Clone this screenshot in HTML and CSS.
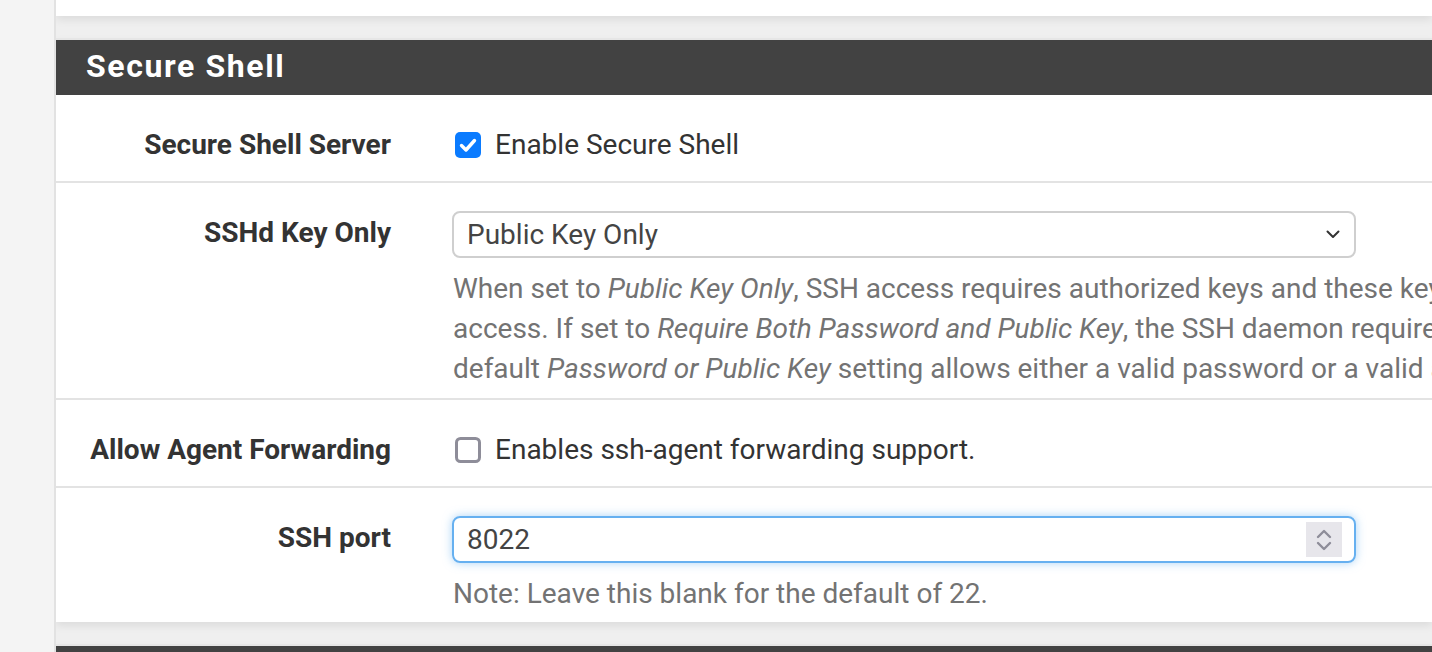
FILE: index.html
```html
<!DOCTYPE html>
<html>
<head>
<meta charset="utf-8">
<link rel="stylesheet" href="styles.css">
</head>
<body>
<div class="page">
  <div class="sidebar"></div>
  <main class="main">
    <section class="panel panel-top"></section>

    <section class="panel">
      <div class="panel-heading"><h2 class="panel-title">Secure Shell</h2></div>
      <div class="panel-body">
        <div class="row">
          <div class="label">Secure Shell Server</div>
          <div class="control">
            <div class="check-line">
              <svg class="cb cb-on" width="26" height="26" viewBox="0 0 26 26"><rect x="0" y="0" width="26" height="26" rx="5" fill="#0a7bff"/><path d="M6.5 13.5 L11 18 L19.5 8.5" fill="none" stroke="#fff" stroke-width="3.4" stroke-linecap="round" stroke-linejoin="round"/></svg>
              <span class="check-text">Enable Secure Shell</span>
            </div>
          </div>
        </div>

        <div class="row row-help">
          <div class="label">SSHd Key Only</div>
          <div class="control">
            <div class="select">
              <span>Public Key Only</span>
              <svg class="chev" width="14" height="9" viewBox="0 0 14 9"><path d="M1.5 1.5 L7 7 L12.5 1.5" fill="none" stroke="#333" stroke-width="2" stroke-linecap="round" stroke-linejoin="round"/></svg>
            </div>
            <div class="help">
              <div class="help-line">When set to <i>Public Key Only</i>, SSH access requires authorized keys and these keys must be configured for each user that has been granted secure shell</div>
              <div class="help-line">access. If set to <i>Require Both Password and Public Key</i>, the SSH daemon requires both authorized keys and valid passwords to gain access. The</div>
              <div class="help-line">default <i>Password or Public Key</i> setting allows either a valid password or a valid authorized key to login.</div>
            </div>
          </div>
        </div>

        <div class="row">
          <div class="label">Allow Agent Forwarding</div>
          <div class="control">
            <div class="check-line">
              <svg class="cb" width="26" height="26" viewBox="0 0 26 26"><rect x="1.5" y="1.5" width="23" height="23" rx="4" fill="#fff" stroke="#8e8d99" stroke-width="3"/></svg>
              <span class="check-text">Enables ssh-agent forwarding support.</span>
            </div>
          </div>
        </div>

        <div class="row row-help row-last">
          <div class="label">SSH port</div>
          <div class="control">
            <div class="input focus">
              <span>8022</span>
              <span class="spinner">
                <svg width="18" height="28" viewBox="0 0 18 28"><path d="M3 11 L9 5 L15 11" fill="none" stroke="#8e8d99" stroke-width="2.4" stroke-linecap="round" stroke-linejoin="round"/><path d="M3 17 L9 23 L15 17" fill="none" stroke="#8e8d99" stroke-width="2.4" stroke-linecap="round" stroke-linejoin="round"/></svg>
              </span>
            </div>
            <div class="help">
              <div class="help-line">Note: Leave this blank for the default of 22.</div>
            </div>
          </div>
        </div>
      </div>
    </section>

    <section class="panel panel-next">
      <div class="panel-heading"></div>
    </section>
  </main>
</div>
</body>
</html>
```

FILE: styles.css
```css
html, body {
  margin: 0;
  padding: 0;
  height: 100%;
  overflow: hidden;
}
body {
  background: #f4f4f4;
  font-family: Roboto, "Liberation Sans", sans-serif;
  color: #333;
}
.page {
  display: flex;
  height: 652px;
  overflow: hidden;
}
.sidebar {
  width: 54px;
  flex: 0 0 54px;
  background: #f4f4f4;
}
.main {
  flex: 1;
  min-width: 0;
  overflow: hidden;
  border-left: 2px solid #e2e2e2;
  background: #efefef;
  display: flex;
  flex-direction: column;
  gap: 22px;
}
.panel {
  background: #fff;
  box-shadow: 0 4px 8px rgba(0, 0, 0, 0.08);
  border-top: 2px solid #e6e6e6;
  flex: 0 0 auto;
}
.panel-top {
  height: 16px;
  border-top: none;
}
.panel-heading {
  background: #424242;
  height: 55px;
  padding-left: 30px;
  display: flex;
  align-items: center;
}
.panel-title {
  margin: 0 0 4px;
  color: #fff;
  font-size: 32px;
  font-weight: 700;
  letter-spacing: 1.6px;
  line-height: 1;
}
.row {
  display: grid;
  grid-template-columns: 335px 904px;
  column-gap: 61px;
  padding: 28px 0 18px;
  border-bottom: 2px solid #e3e3e3;
}
.row-help {
  padding-bottom: 10px;
}
.row-last {
  border-bottom: none;
  padding-bottom: 9px;
}
.label {
  text-align: right;
  font-weight: 700;
  font-size: 28px;
  line-height: 40px;
  padding-top: 2px;
  margin-bottom: -2px;
  color: #333;
  white-space: nowrap;
}
.control {
  font-size: 28px;
  color: #333;
  min-width: 0;
}
.check-line {
  height: 40px;
  display: flex;
  align-items: center;
  gap: 14px;
  padding-left: 3px;
  line-height: 40px;
  white-space: nowrap;
}
.check-text {
  padding-top: 4px;
}
.cb {
  flex: 0 0 26px;
  margin-top: 4px;
}
.select, .input {
  box-sizing: border-box;
  height: 47px;
  border: 2px solid #cfcfcf;
  border-radius: 8px;
  display: flex;
  align-items: center;
  justify-content: space-between;
  padding: 0 14px 0 13px;
  color: #444;
  font-size: 28px;
}
.input.focus {
  border-color: #66b0f0;
  box-shadow: 0 0 10px rgba(102, 176, 240, 0.55);
  padding-right: 12px;
}
.spinner {
  width: 36px;
  height: 35px;
  background: #e7e6eb;
  display: flex;
  align-items: center;
  justify-content: center;
}
.help {
  margin-top: 10px;
  color: #737373;
  font-size: 28px;
  line-height: 40px;
}
.help-line {
  white-space: nowrap;
  padding-left: 1px;
  padding-top: 1px;
  margin-bottom: -1px;
}
.panel-next {
  flex: 1 0 auto;
}
```
